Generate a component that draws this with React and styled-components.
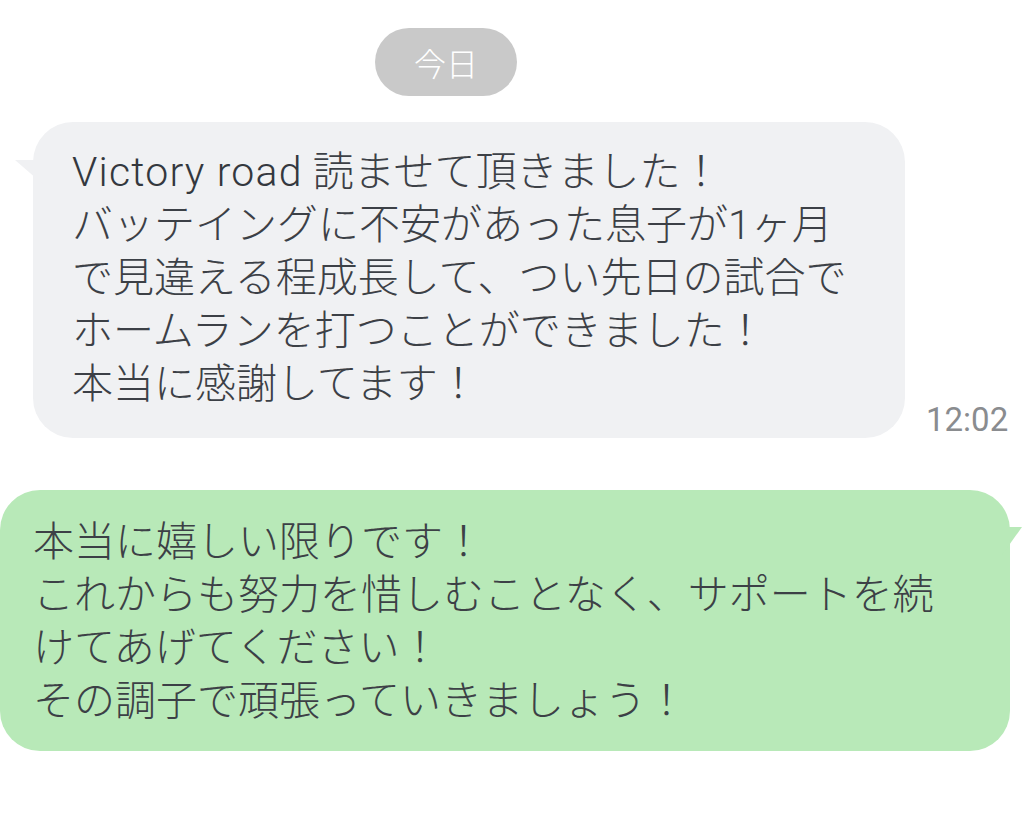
import React from "react";
import styled, { createGlobalStyle } from "styled-components";

const Global = createGlobalStyle`
  html, body { margin: 0; padding: 0; background: #ffffff; }
  body { font-family: Roboto, "Noto Sans CJK JP", "Noto Sans", sans-serif; }
`;

const Page = styled.div`
  width: 1024px;
  height: 825px;
  overflow: hidden;
  display: flex;
  flex-direction: column;
  padding-top: 28px;
  box-sizing: border-box;
`;

const DateRow = styled.div`
  display: flex;
  padding-left: 375px;
`;

const DatePill = styled.div`
  height: 68px;
  padding: 0 39px;
  border-radius: 34px;
  background: #c9c9c9;
  color: #ffffff;
  font-size: 32px;
  font-weight: 300;
  display: flex;
  align-items: center;
  justify-content: center;
  font-family: "Noto Sans CJK JP", sans-serif;
`;

const Row = styled.div`
  display: flex;
  align-items: flex-end;
  margin-top: ${(p) => p.$gap}px;
  padding-left: ${(p) => p.$left}px;
  gap: 21px;
`;

const Bubble = styled.div`
  position: relative;
  width: ${(p) => p.$width}px;
  box-sizing: border-box;
  padding: ${(p) => p.$pad};
  border-radius: 40px;
  background: ${(p) => (p.$mine ? "#b8e9b8" : "#f0f1f3")};
  color: #3c4046;
  font-size: 41px;
  font-weight: 300;
  line-height: 53px;
  white-space: nowrap;

  &::before {
    content: "";
    position: absolute;
    background: inherit;
    border-radius: 0;
    ${(p) =>
      p.$mine
        ? `right: -12px; top: 37px; width: 20px; height: 28px;
           clip-path: polygon(0 0, 100% 0, 0 100%);`
        : `left: -18px; top: 38px; width: 30px; height: 26px;
           clip-path: polygon(0 0, 100% 0, 100% 100%);`}
  }
`;

const Latin = styled.span`
  font-weight: 300;
  letter-spacing: 1.2px;
  color: #34383e;
`;

const Time = styled.div`
  font-size: 33px;
  line-height: 33px;
  color: #8a8c8f;
  margin-bottom: 2px;
  font-family: Roboto, sans-serif;
`;

const Line = styled.div``;

const mine = [
  "本当に嬉しい限りです！",
  "これからも努力を惜しむことなく、サポートを続",
  "けてあげてください！",
  "その調子で頑張っていきましょう！",
];

export default function App() {
  return (
    <Page>
      <Global />
      <DateRow>
        <DatePill>今日</DatePill>
      </DateRow>
      <Row $gap={26} $left={33}>
        <Bubble $width={872} $pad="24px 20px 27px 39px">
          <Line>
            <Latin>Victory road</Latin> 読ませて頂きました！
          </Line>
          <Line>バッテイングに不安があった息子が1ヶ月</Line>
          <Line>で見違える程成長して、つい先日の試合で</Line>
          <Line>ホームランを打つことができました！</Line>
          <Line>本当に感謝してます！</Line>
        </Bubble>
        <Time>12:02</Time>
      </Row>
      <Row $gap={52} $left={0}>
        <Bubble $mine $width={1010} $pad="26px 20px 23px 33px">
          {mine.map((t) => (
            <Line key={t}>{t}</Line>
          ))}
        </Bubble>
      </Row>
    </Page>
  );
}
